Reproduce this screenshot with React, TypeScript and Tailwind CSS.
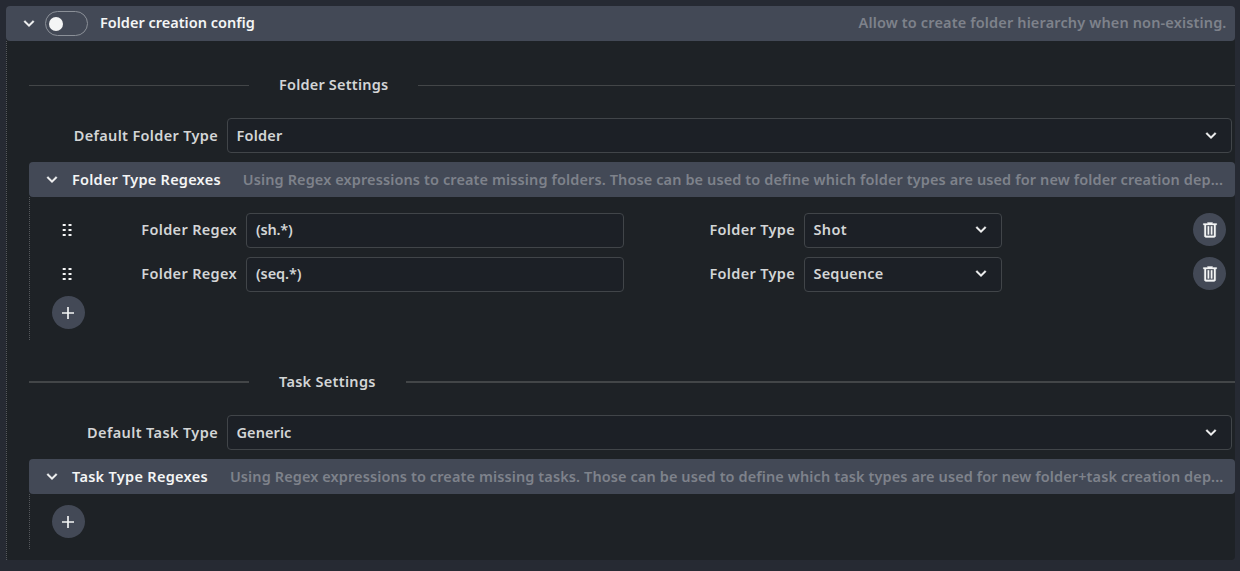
import type { ReactNode } from 'react';

function Chevron() {
  return (
    <svg width="20" height="20" viewBox="0 -960 960 960" fill="currentColor" stroke="currentColor" strokeWidth="22" className="shrink-0">
      <path d="M480-352 234-594l52-52 194 190 194-190 52 52-246 242Z" />
    </svg>
  );
}

function PlusIcon() {
  return (
    <svg width="20" height="20" viewBox="0 -960 960 960" fill="currentColor">
      <path d="M440-440H192v-80h248v-248h80v248h248v80H520v248h-80v-248Z" />
    </svg>
  );
}

function TrashIcon() {
  return (
    <svg width="20" height="20" viewBox="0 -960 960 960" fill="currentColor" stroke="currentColor" strokeWidth="16">
      <path d="M288-120q-33 0-56.500-23.500T208-200v-520h-48v-72h200v-48h240v48h200v72h-48v520q0 33-23.500 56.500T672-120H288Zm384-600H288v520h384v-520ZM370-264h68v-392h-68v392Zm152 0h68v-392h-68v392Z" />
    </svg>
  );
}

function GripIcon() {
  return (
    <svg width="11" height="12" viewBox="0 0 11 12" fill="currentColor">
      <path d="M0.700 0h3v2h-3zM6.500 0h3v2h-3zM0.700 5h3v2h-3zM6.500 5h3v2h-3zM0.700 10h3v2h-3zM6.500 10h3v2h-3z" />
    </svg>
  );
}

function RoundButton({ label, children }: { label: string; children: ReactNode }) {
  return (
    <button aria-label={label} className="flex size-[33px] shrink-0 items-center justify-center rounded-full bg-[#434956] text-[#f4f5f5]">
      {children}
    </button>
  );
}

function Select({ value, className }: { value: ReactNode; className: string }) {
  return (
    <div className={`flex h-[35px] items-center justify-between rounded border border-[#414549] bg-[#1c2026] pl-[8.5px] ${className}`}>
      <span className="pb-[2px]">{value}</span>
      <span className="flex text-[#f4f5f5]"><Chevron /></span>
    </div>
  );
}

function SectionTitle({ children, line }: { children: ReactNode; line: string }) {
  return (
    <div className="flex h-[22px] items-center">
      <div className={`w-[220px] shrink-0 bg-[#434648] ${line}`} />
      <div className="mr-[30px] ml-[30px] shrink-0 pb-[2px]">{children}</div>
      <div className={`grow bg-[#434648] ${line}`} />
    </div>
  );
}

function GroupHeader({ title, hint }: { title: ReactNode; hint: ReactNode }) {
  return (
    <div className="flex h-[35px] items-center rounded bg-[#434956] pl-[13px] text-[#f4f5f5]">
      <Chevron />
      <div className="ml-[10px] shrink-0 pb-[2px]">{title}</div>
      <div className="ml-[22px] pb-[2px] text-[#7e828b]">{hint}</div>
    </div>
  );
}

function RegexRow({ regex, type }: { regex: ReactNode; type: ReactNode }) {
  return (
    <div className="flex h-[35px] items-center">
      <span className="ml-[32px] flex w-[11px] pb-px text-[#f4f5f5]"><GripIcon /></span>
      <span className="w-[164px] pb-[3px] text-right tracking-[0.33px]">Folder Regex</span>
      <div className="ml-[9px] flex h-[35px] w-[378px] items-center rounded border border-[#414549] bg-[#1c2026] pb-[3px] pl-[9px]">{regex}</div>
      <span className="w-[171px] pb-[3px] text-right tracking-[0.33px]">Folder Type</span>
      <Select className="ml-[9px] w-[198px] pr-[10px] pb-px" value={type} />
      <span className="mb-[2px] mr-[9px] ml-auto"><RoundButton label="Remove"><TrashIcon /></RoundButton></span>
    </div>
  );
}

export default function App() {
  return (
    <div className="h-[571px] w-[1240px] overflow-hidden whitespace-nowrap bg-[#262a33] pt-[6px] pr-[5px] pl-[6px] font-['Noto_Sans',sans-serif] text-[14.5px] leading-[22px] font-semibold text-[#d3d5d6]">
      <div className="h-[554px] rounded bg-[#1e2226]">
        <div className="flex h-[35px] items-center rounded bg-[#434956] pr-[8.5px] pl-[13px] text-[#f4f5f5]">
          <Chevron />
          <div className="ml-[6px] flex h-[25px] w-[43px] items-center rounded-full border border-[#8b9098] pl-[3px]">
            <div className="size-[14px] rounded-full bg-[#f4f5f5]" />
          </div>
          <span className="ml-[12px] pb-[3px]">Folder creation config</span>
          <span className="ml-auto pb-[3px] tracking-[0.14px] text-[#7e828b]">Allow to create folder hierarchy when non-existing.</span>
        </div>
        <div className="h-[519px] border-l border-dotted border-[#55585c] pt-[33px] pl-[22px]">
          <SectionTitle line="h-px"><span className="tracking-[0.2px]">Folder Settings</span></SectionTitle>
          <div className="mt-[22px] flex items-center">
            <span className="w-[189px] pb-[2px] text-right tracking-[0.33px]">Default Folder Type</span>
            <Select className="mr-[3px] ml-[9px] grow pr-[10px]" value={<span className="tracking-[0.2px]">Folder</span>} />
          </div>
          <div className="mt-[9px]">
            <GroupHeader
              title={<span className="tracking-[0.24px]">Folder Type Regexes</span>}
              hint={<span className="tracking-[0.11px]">Using Regex expressions to create missing folders. Those can be used to define which folder types are used for new folder creation dep...</span>}
            />
            <div className="h-[143px] border-l border-dotted border-[#55585c] pt-[16px]">
              <RegexRow regex={<span className="tracking-[-0.2px]">(sh.*)</span>} type={<span className="tracking-[0.4px]">Shot</span>} />
              <div className="mt-[9px]">
                <RegexRow regex={<span className="tracking-[-0.1px]">(seq.*)</span>} type={<span className="tracking-[0.2px]">Sequence</span>} />
              </div>
              <div className="mt-[4px] ml-[22px]"><RoundButton label="Add"><span className="mr-px"><PlusIcon /></span></RoundButton></div>
            </div>
          </div>
          <div className="mt-[31px]">
            <SectionTitle line="h-[2px]"><span className="tracking-[0.3px]">Task Settings</span></SectionTitle>
          </div>
          <div className="mt-[22px] flex items-center">
            <span className="w-[189px] pb-[2px] text-right tracking-[0.38px]">Default Task Type</span>
            <Select className="mr-[3px] ml-[9px] grow pr-[10px]" value={<span className="tracking-[0.08px]">Generic</span>} />
          </div>
          <div className="mt-[9px]">
            <GroupHeader
              title={<span className="tracking-[0.3px]">Task Type Regexes</span>}
              hint={<span className="tracking-[0.105px]">Using Regex expressions to create missing tasks. Those can be used to define which task types are used for new folder+task creation dep...</span>}
            />
            <div className="h-[55px] border-l border-dotted border-[#55585c] pt-[11px] pl-[22px]">
              <RoundButton label="Add"><span className="mr-px"><PlusIcon /></span></RoundButton>
            </div>
          </div>
        </div>
      </div>
    </div>
  );
}
